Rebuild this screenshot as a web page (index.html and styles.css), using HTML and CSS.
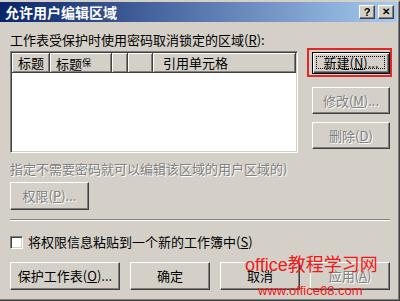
FILE: index.html
```html
<!DOCTYPE html>
<html>
<head>
<meta charset="utf-8">
<link rel="stylesheet" href="styles.css">
</head>
<body>
<div class="dialog">
  <div class="titlebar">
    <span class="title">允许用户编辑区域</span>
    <div class="caps">
      <span class="cap">?</span>
      <span class="cap cap-x">✕</span>
    </div>
  </div>
  <div class="content">
    <div class="label">工作表受保护时使用密码取消锁定的区域(<u>R</u>):</div>
    <div class="main">
      <div class="listbox">
        <div class="header">
          <div class="hc c1">标题</div>
          <div class="hc c2">标题<span class="small">保</span></div>
          <div class="hc c3"></div>
          <div class="hc c4"></div>
          <div class="hc c5">引用单元格</div>
        </div>
      </div>
      <div class="side">
        <div class="btn btn-default btn-side highlight"><span>新建(<u>N</u>)...</span></div>
        <div class="btn btn-side disabled btn-mod"><span>修改(<u>M</u>)...</span></div>
        <div class="btn btn-side disabled btn-del"><span>删除(<u>D</u>)</span></div>
      </div>
    </div>
    <div class="label disabled-text">指定不需要密码就可以编辑该区域的用户区域的)</div>
    <div class="btn btn-perm disabled"><span>权限(<u>P</u>)...</span></div>
    <div class="sep"></div>
    <div class="check-row">
      <span class="checkbox"></span>
      <span>将权限信息粘贴到一个新的工作簿中(<u>S</u>)</span>
    </div>
    <div class="bottom">
      <div class="btn b-protect"><span>保护工作表(<u>O</u>)...</span></div>
      <div class="btn b-std"><span>确定</span></div>
      <div class="btn b-std"><span>取消</span></div>
      <div class="btn b-std disabled"><span>应用(<u>A</u>)</span></div>
    </div>
  </div>
  <div class="wm wm1">office教程学习网</div>
  <div class="wm wm2">www.office68.com</div>
</div>
</body>
</html>
```

FILE: styles.css
```css
* { box-sizing: border-box; }
html, body { margin: 0; padding: 0; }
body {
  width: 400px;
  height: 301px;
  overflow: hidden;
  background: #d4d0c8;
  font-family: "Noto Sans CJK SC", "Liberation Sans", sans-serif;
  font-size: 13px;
  color: #000;
}
.dialog {
  position: relative;
  width: 400px;
  height: 301px;
  background: #d4d0c8;
  border-top: 2px solid #d4d0c8;
  border-right: 1px solid #404040;
  border-bottom: 1px solid #404040;
  box-shadow: inset -1px -1px #808080;
  overflow: hidden;
}
.titlebar {
  height: 20px;
  margin-right: 2px;
  background: linear-gradient(to right, #0a246a, #a6caf0);
  display: flex;
  align-items: center;
  justify-content: space-between;
  padding: 0 3px 0 5px;
}
.title {
  color: #fff;
  font-weight: bold;
  font-size: 14px;
  line-height: 16px;
  letter-spacing: 0;
}
.caps { display: flex; gap: 3px; }
.cap {
  width: 16px;
  height: 14px;
  background: #d4d0c8;
  border: 1px solid;
  border-color: #fff #404040 #404040 #fff;
  box-shadow: inset -1px -1px #808080;
  font-family: "Liberation Sans", sans-serif;
  font-weight: bold;
  font-size: 11px;
  line-height: 12px;
  text-align: center;
  color: #000;
}
.cap-x { font-size: 10px; }
.content {
  padding: 0 9px 0 10px;
  display: flex;
  flex-direction: column;
}
.label {
  margin-top: 10px;
  line-height: 16px;
  white-space: nowrap;
}
.main {
  display: flex;
  margin-top: 3px;
}
.listbox {
  width: 288px;
  height: 102px;
  background: #fff;
  border: 1px solid;
  border-color: #808080 #fff #fff #808080;
  box-shadow: inset 1px 1px #404040, inset -1px -1px #d4d0c8;
  padding: 1px;
}
.header {
  display: flex;
  height: 20px;
  background: #d4d0c8;
}
.hc {
  height: 20px;
  border-right: 1px solid #404040;
  border-bottom: 1px solid #404040;
  box-shadow: inset 1px 1px #fff, inset -1px -1px #808080;
  line-height: 19px;
  padding-left: 6px;
  white-space: nowrap;
  overflow: hidden;
}
.c1 { width: 38px; }
.c2 { width: 62px; }
.c3 { width: 16px; }
.c4 { width: 25px; }
.c5 { flex: 1; padding-left: 10px; }
.small { font-size: 9px; vertical-align: 3px; }
.side {
  margin-left: 14px;
  display: flex;
  flex-direction: column;
}
.btn {
  position: relative;
  background: #d4d0c8;
  border: 1px solid;
  border-color: #fff #404040 #404040 #fff;
  box-shadow: inset -1px -1px #808080;
  display: flex;
  align-items: center;
  justify-content: center;
  white-space: nowrap;
  line-height: 16px;
}
.btn-side { width: 78px; }
.btn-default {
  height: 22px;
  margin-top: 1px;
  border: 1px solid #000;
  box-shadow: inset 1px 1px #fff, inset -1px -1px #404040, inset -2px -2px #808080;
}
.btn-default::after {
  content: "";
  position: absolute;
  top: 3px; left: 3px; right: 4px; bottom: 4px;
  border: 1px dotted #000;
}
.highlight::before {
  content: "";
  position: absolute;
  top: -5px; left: -6px; right: -3px; bottom: -4px;
  border: 2px solid #e02828;
}
.btn-mod { height: 27px; margin-top: 13px; }
.btn-del { height: 27px; margin-top: 8px; }
.disabled { color: #808080; }
.disabled span, .disabled-text { color: #808080; text-shadow: 1px 1px #fff; }
.disabled-text { margin-top: 7px; line-height: 18px; }
.btn-perm { width: 79px; height: 28px; margin-top: 4px; }
.sep {
  margin-top: 9px;
  height: 2px;
  border-top: 1px solid #808080;
  border-bottom: 1px solid #fff;
}
.check-row {
  margin-top: 13px;
  display: flex;
  align-items: center;
  gap: 5px;
  line-height: 16px;
  white-space: nowrap;
}
.checkbox {
  width: 13px;
  height: 13px;
  background: #fff;
  border: 1px solid;
  border-color: #808080 #fff #fff #808080;
  box-shadow: inset 1px 1px #404040, inset -1px -1px #d4d0c8;
}
.bottom {
  margin-top: 12px;
  display: flex;
  gap: 10px;
}
.bottom .btn { height: 28px; }
.b-protect { width: 110px; }
.b-std { width: 80px; }
.wm {
  position: absolute;
  color: #f01818;
  font-family: "Liberation Sans", "Noto Sans CJK SC", sans-serif;
  white-space: nowrap;
}
.wm1 { left: 245px; top: 252px; font-size: 18px; line-height: 22px; }
.wm2 { left: 258px; top: 281px; font-size: 13px; line-height: 15px; }
```
